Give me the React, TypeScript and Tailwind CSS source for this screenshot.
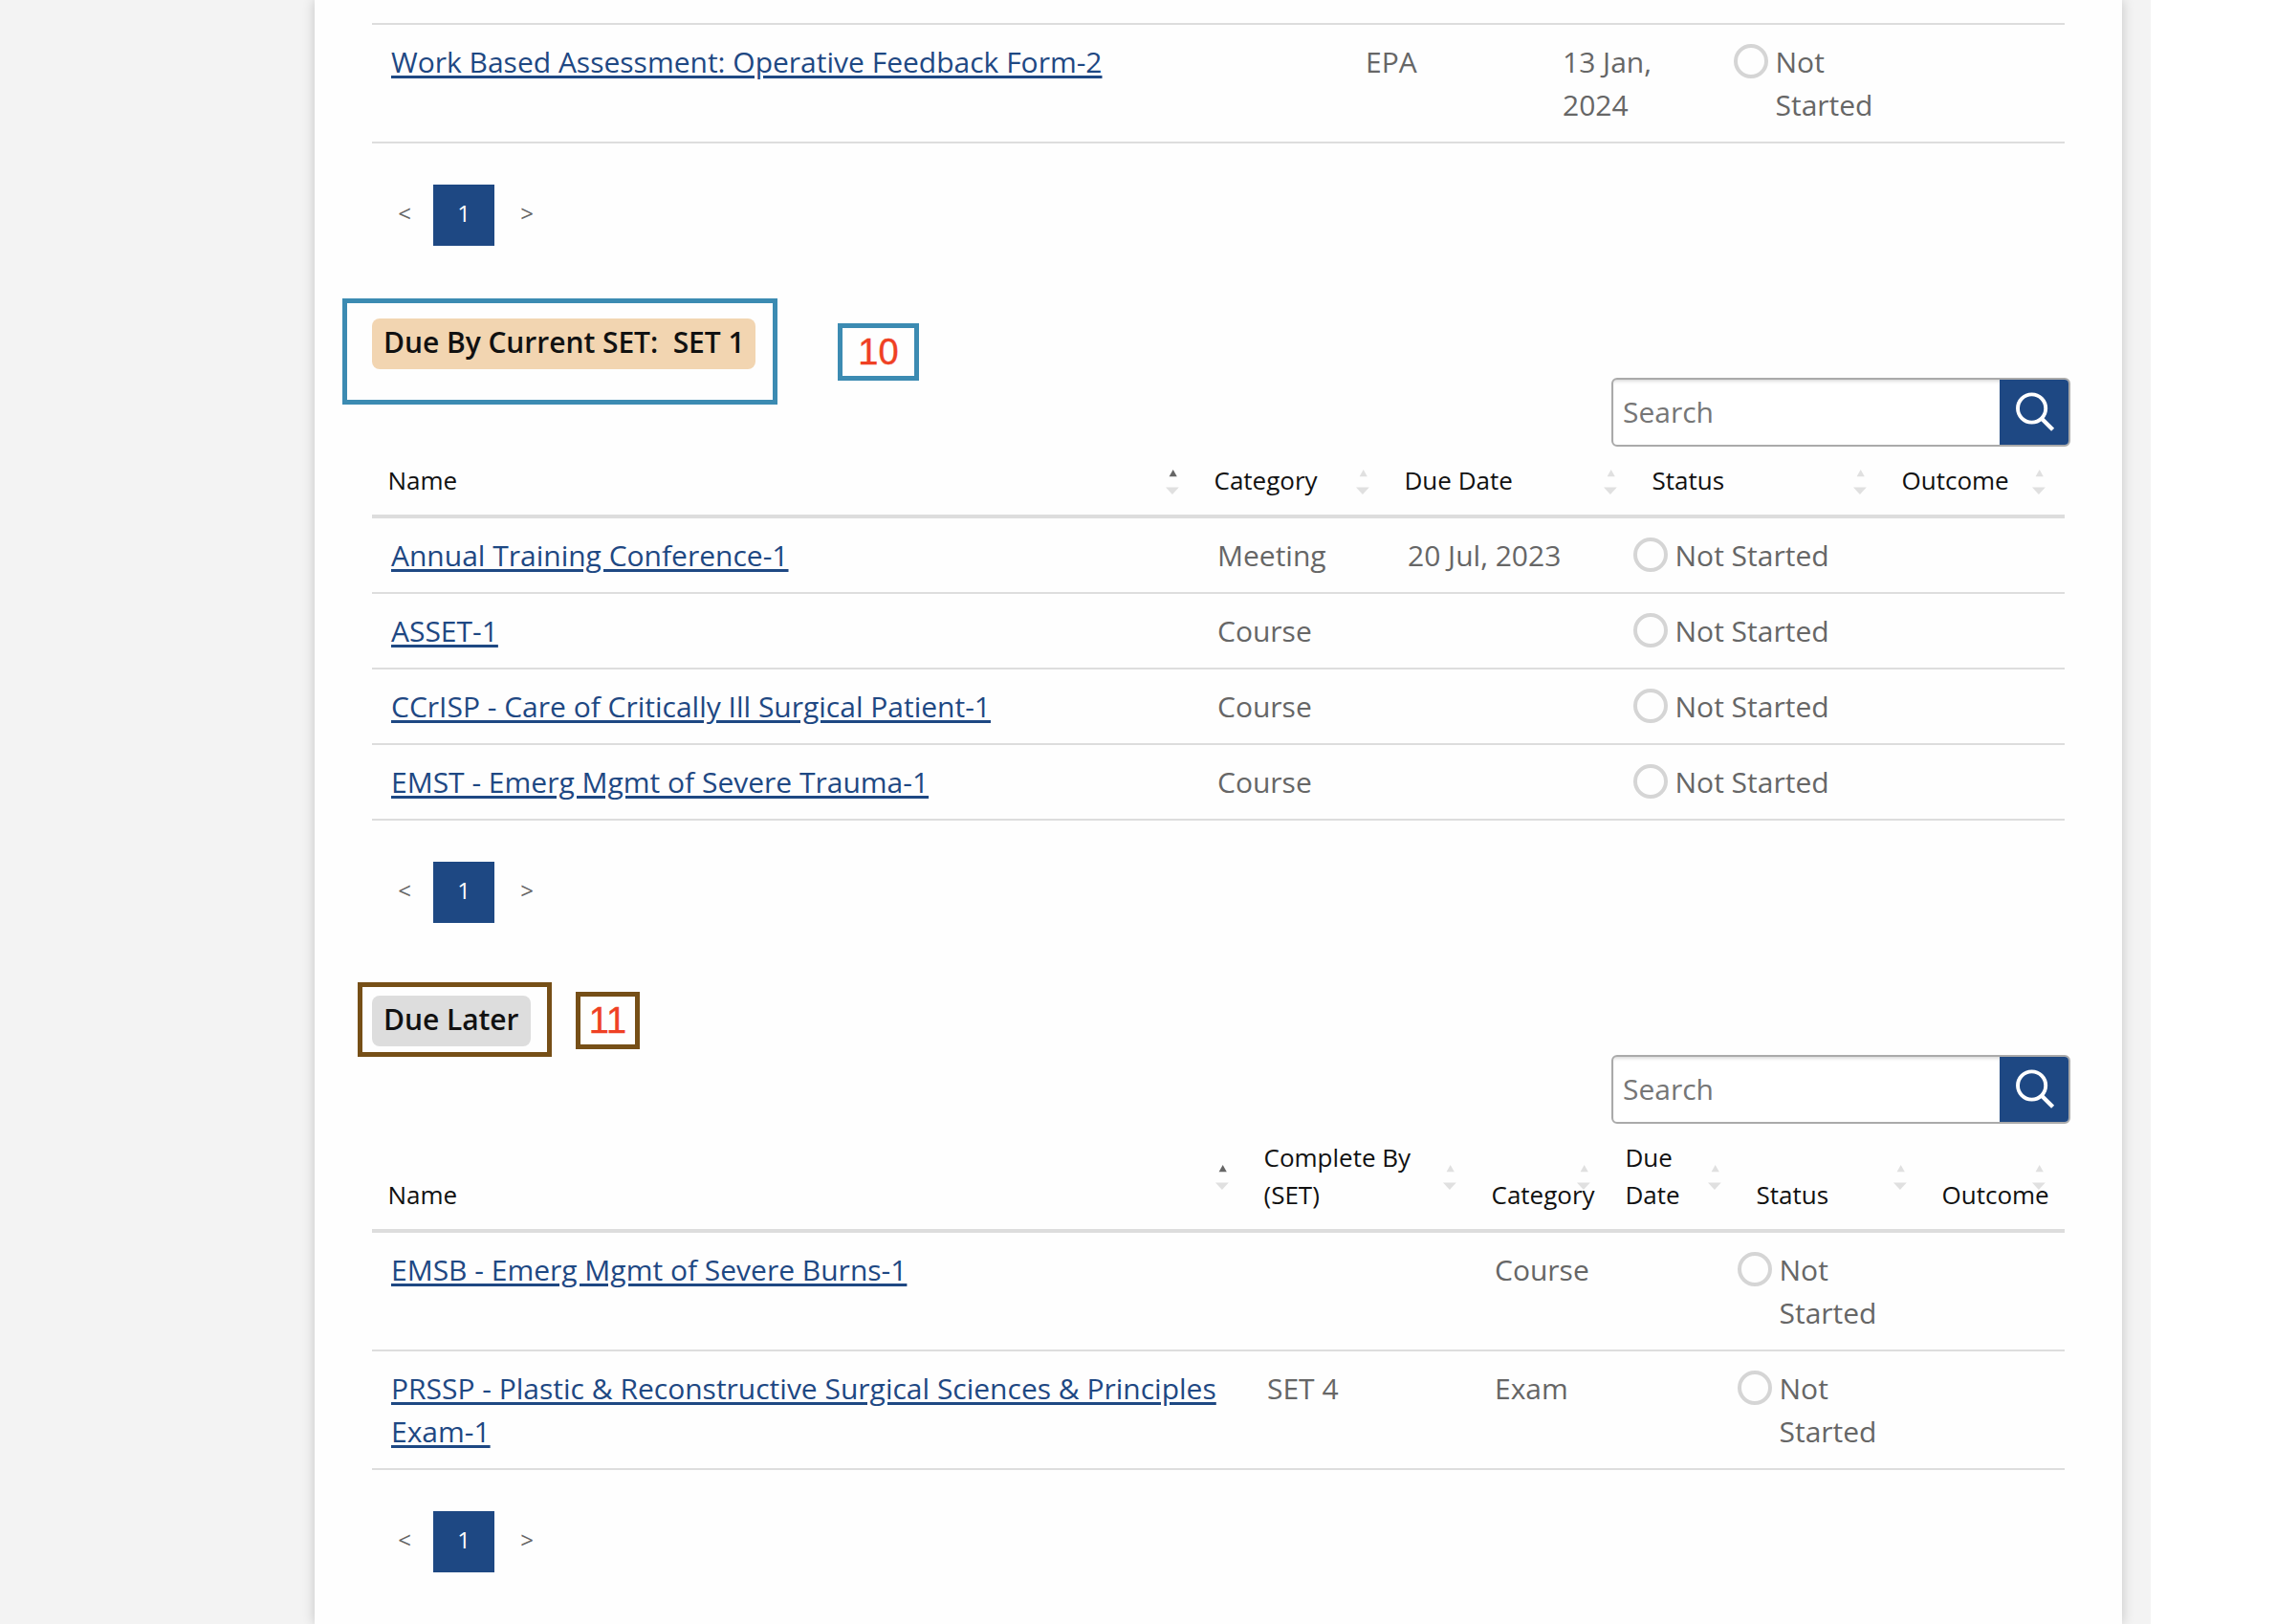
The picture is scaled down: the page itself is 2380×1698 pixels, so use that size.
import type { ReactNode } from "react";

type Column = { label: string; width: number; active?: boolean };
type Row = {
  name: string;
  cells: string[];
};

function SortIcon({ active }: { active?: boolean }) {
  return (
    <svg
      className="absolute right-[20px] top-1/2 -mt-[12px] h-[26px] w-[14px]"
      viewBox="0 0 14 26"
      aria-hidden="true"
    >
      <path d="M7.7 0 L11.8 7.3 H3.6 Z" fill={active ? "#666666" : "#e0e0e0"} />
      <path d="M0 18.6 H13.8 L6.9 26 Z" fill="#e0e0e0" />
    </svg>
  );
}

function Status() {
  return (
    <div className="relative pl-[40.5px] pr-0">
      <span className="absolute -left-[3px] top-[4px] size-[36px] rounded-full border-4 border-[#d5d5d5]" />
      Not Started
    </div>
  );
}

function TaskTable({ columns, rows, hideHeader }: { columns: Column[]; rows: Row[]; hideHeader?: boolean }) {
  return (
    <table className="w-[1770px] table-fixed border-separate border-spacing-0 text-left">
      <colgroup>
        {columns.map((c) => (
          <col key={c.label} style={{ width: c.width }} />
        ))}
      </colgroup>
      {!hideHeader && (
        <thead>
          <tr>
            {columns.map((c) => (
              <th
                key={c.label}
                className="relative border-b-4 border-[#dddddd] pb-4 pl-[16.5px] pr-[40px] pt-4 align-bottom text-[26px] font-normal leading-[39px] text-[#111111]"
              >
                <SortIcon active={c.active} />
                <span className="relative">{c.label}</span>
              </th>
            ))}
          </tr>
        </thead>
      )}
      <tbody>
        {rows.map((r) => (
          <tr key={r.name} className="align-top">
            <td className="border-b-2 border-[#dddddd] py-4 pl-5 pr-6">
              <a className="text-[#1e4883] underline decoration-[3px] underline-offset-[3px]">{r.name}</a>
            </td>
            {r.cells.map((cell, i) =>
              cell === "status" ? (
                <td key={i} className="border-b-2 border-[#dddddd] py-4">
                  <Status />
                </td>
              ) : (
                <td key={i} className="border-b-2 border-[#dddddd] py-4 pl-5 pr-6">
                  {cell}
                </td>
              ),
            )}
          </tr>
        ))}
      </tbody>
    </table>
  );
}

function Pagination() {
  return (
    <nav className="mt-[43px] flex h-[64px] items-stretch text-[24px] leading-[60px]">
      <span className="w-[64px] pl-[4px] text-center">&lt;</span>
      <span className="w-[64px] bg-[#1e4883] text-center text-white">1</span>
      <span className="w-[64px] pl-[4px] text-center">&gt;</span>
    </nav>
  );
}

function SearchBox() {
  return (
    <div className="-mr-[6px] ml-auto flex h-[72px] w-[480px] overflow-hidden rounded-[6px] border-2 border-[#aaaaaa] bg-white">
      <div className="flex-1 pl-[10px] leading-[68px] text-[#767676] shadow-[inset_0_3px_4px_-2px_rgba(0,0,0,0.2)]">
        Search
      </div>
      <div className="flex w-[72px] items-center justify-center bg-[#1e4883]">
        <svg className="size-[72px] shrink-0" viewBox="0 0 72 72" fill="none" stroke="#ffffff" aria-hidden="true">
          <circle cx="33.6" cy="32" r="14.6" strokeWidth="3.9" />
          <path d="M44 42.8 L55.6 54.2" strokeWidth="4.4" strokeLinecap="butt" />
        </svg>
      </div>
    </div>
  );
}

function Heading({ badge, children }: { badge: ReactNode; children: ReactNode }) {
  return (
    <div className="relative mt-[76px] h-[62px]">
      {badge}
      {children}
    </div>
  );
}

const firstColumns: Column[] = [
  { label: "Name", width: 1019 },
  { label: "Category", width: 206 },
  { label: "Due Date", width: 202 },
  { label: "Status", width: 194 },
  { label: "Outcome", width: 149 },
];

const currentColumns: Column[] = [
  { label: "Name", width: 864, active: true },
  { label: "Category", width: 199 },
  { label: "Due Date", width: 259 },
  { label: "Status", width: 261 },
  { label: "Outcome", width: 187 },
];

const laterColumns: Column[] = [
  { label: "Name", width: 916, active: true },
  { label: "Complete By (SET)", width: 238 },
  { label: "Category", width: 140 },
  { label: "Due Date", width: 137 },
  { label: "Status", width: 194 },
  { label: "Outcome", width: 145 },
];

export default function App() {
  return (
    <div className="h-[1698px] w-[2380px] overflow-hidden bg-white font-['Open_Sans',sans-serif] text-[30px] leading-[45px] text-[#666666]">
      <div className="flex h-full w-[2249px] overflow-hidden bg-[#f3f3f3] pl-[329px]">
        <main className="w-[1890px] bg-[#fefefe] px-[60px] pt-[24px] shadow-[0_0_12px_rgba(0,0,0,0.2)]">
          <section>
            <div className="w-[1770px] border-t-2 border-[#dddddd]" />
            <TaskTable
              hideHeader
              columns={firstColumns}
              rows={[
                {
                  name: "Work Based Assessment: Operative Feedback Form-2",
                  cells: ["EPA", "13 Jan, 2024", "status", ""],
                },
              ]}
            />
            <Pagination />
          </section>

          <section>
            <Heading
              badge={
                <h2 className="inline-block h-[53px] w-[401px] whitespace-pre rounded-[8px] bg-[#f2d5b1] pl-[12px] text-[30px] font-semibold leading-[49px] tracking-[-0.05px] text-[#111111]">
                  {"Due By Current SET:  SET 1"}
                </h2>
              }
            >
              <div className="absolute -left-[31px] -top-[21px] h-[111px] w-[455px] border-[5px] border-[#3c8bb2]" />
              <div className="absolute left-[487px] top-[5px] h-[60px] w-[85px] border-[5px] border-[#3c8bb2] text-center font-['Liberation_Sans',sans-serif] text-[38px] leading-[50px] text-[#ef4023] [-webkit-text-stroke:0.4px_#ef4023]">
                10
              </div>
            </Heading>
            <SearchBox />
            <TaskTable
              columns={currentColumns}
              rows={[
                { name: "Annual Training Conference-1", cells: ["Meeting", "20 Jul, 2023", "status", ""] },
                { name: "ASSET-1", cells: ["Course", "", "status", ""] },
                { name: "CCrISP - Care of Critically Ill Surgical Patient-1", cells: ["Course", "", "status", ""] },
                { name: "EMST - Emerg Mgmt of Severe Trauma-1", cells: ["Course", "", "status", ""] },
              ]}
            />
            <Pagination />
          </section>

          <section>
            <Heading
              badge={
                <h2 className="inline-block h-[53px] w-[166px] whitespace-pre rounded-[8px] bg-[#dddddd] pl-[12px] text-[30px] font-semibold leading-[49px] tracking-[-0.05px] text-[#111111]">
                  Due Later
                </h2>
              }
            >
              <div className="absolute -left-[15px] -top-[14px] h-[78px] w-[203px] border-[5px] border-[#764f17]" />
              <div className="absolute left-[213px] top-[-4px] h-[60px] w-[67px] border-[5px] border-[#764f17] text-center font-['Liberation_Sans',sans-serif] text-[38px] leading-[50px] text-[#ef4023] [-webkit-text-stroke:0.4px_#ef4023]">
                11
              </div>
            </Heading>
            <SearchBox />
            <TaskTable
              columns={laterColumns}
              rows={[
                { name: "EMSB - Emerg Mgmt of Severe Burns-1", cells: ["", "Course", "", "status", ""] },
                {
                  name: "PRSSP - Plastic & Reconstructive Surgical Sciences & Principles Exam-1",
                  cells: ["SET 4", "Exam", "", "status", ""],
                },
              ]}
            />
            <Pagination />
          </section>
        </main>
      </div>
    </div>
  );
}
